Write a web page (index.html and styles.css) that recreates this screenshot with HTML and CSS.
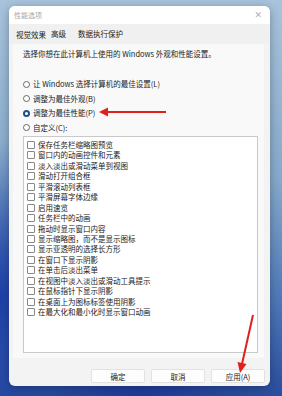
FILE: index.html
```html
<!DOCTYPE html>
<html lang="zh-CN">
<head>
  <meta charset="UTF-8">
  <meta name="viewport" content="width=device-width, initial-scale=1.0">
  <title>性能选项</title>
  <link rel="stylesheet" href="styles.css">
</head>
<body>
  <div class="dialog">
    <div class="titlebar">
      <span class="title">性能选项</span>
      <span class="close">✕</span>
    </div>
    <div class="tabs">
      <span class="tab active">视觉效果</span>
      <span class="tab">高级</span>
      <span class="tab">数据执行保护</span>
    </div>
    <div class="panel">
      <p class="desc">选择你想在此计算机上使用的 Windows 外观和性能设置。</p>
      <div class="radios">
        <label class="radio"><span class="dot"></span>让 Windows 选择计算机的最佳设置(L)</label>
        <label class="radio"><span class="dot"></span>调整为最佳外观(B)</label>
        <label class="radio"><span class="dot on"></span>调整为最佳性能(P)</label>
        <label class="radio"><span class="dot"></span>自定义(C):</label>
      </div>
      <div class="list">
        <label class="item"><span class="box"></span>保存任务栏缩略图预览</label>
        <label class="item"><span class="box"></span>窗口内的动画控件和元素</label>
        <label class="item"><span class="box"></span>淡入淡出或滑动菜单到视图</label>
        <label class="item"><span class="box"></span>滑动打开组合框</label>
        <label class="item"><span class="box"></span>平滑滚动列表框</label>
        <label class="item"><span class="box"></span>平滑屏幕字体边缘</label>
        <label class="item"><span class="box"></span>启用速览</label>
        <label class="item"><span class="box"></span>任务栏中的动画</label>
        <label class="item"><span class="box"></span>拖动时显示窗口内容</label>
        <label class="item"><span class="box"></span>显示缩略图，而不是显示图标</label>
        <label class="item"><span class="box"></span>显示亚透明的选择长方形</label>
        <label class="item"><span class="box"></span>在窗口下显示阴影</label>
        <label class="item"><span class="box"></span>在单击后淡出菜单</label>
        <label class="item"><span class="box"></span>在视图中淡入淡出或滑动工具提示</label>
        <label class="item"><span class="box"></span>在鼠标指针下显示阴影</label>
        <label class="item"><span class="box"></span>在桌面上为图标标签使用阴影</label>
        <label class="item"><span class="box"></span>在最大化和最小化时显示窗口动画</label>
      </div>
    </div>
    <div class="buttons">
      <button class="btn">确定</button>
      <button class="btn">取消</button>
      <button class="btn">应用(A)</button>
    </div>
  </div>

  <svg class="arrows" width="282" height="396" viewBox="0 0 282 396">
    <line x1="166" y1="112" x2="106" y2="112" stroke="#e0201c" stroke-width="2"/>
    <polygon points="99,112 108,107.5 108,116.5" fill="#e0201c"/>
    <line x1="253" y1="315" x2="242" y2="364" stroke="#e0201c" stroke-width="2"/>
    <polygon points="240,373 237.5,362 246.5,364" fill="#e0201c"/>
  </svg>
</body>
</html>
```

FILE: styles.css
```css
* {
  box-sizing: border-box;
}
body {
  margin: 0;
  width: 282px;
  height: 396px;
  overflow: hidden;
  font-family: "Noto Sans CJK SC", "Noto Sans", sans-serif;
  font-size: 7.5px;
  color: #222;
  background:
    radial-gradient(ellipse 60px 160px at 0px 300px, #1c3fa8 0%, rgba(28, 63, 168, 0) 100%),
    radial-gradient(ellipse 120px 60px at 140px 400px, #1d3a9a 0%, rgba(29, 58, 154, 0) 100%),
    linear-gradient(to bottom, #a8c3dc 0%, #86aacb 45%, #4f79b8 75%, #2a4d9e 100%);
}
.dialog {
  margin: 6px 0 0 9px;
  width: 261px;
  height: 380px;
  background: #f3f3f3;
  border-radius: 6px;
  overflow: hidden;
  box-shadow: 0 2px 10px rgba(0, 0, 0, 0.3);
  display: flex;
  flex-direction: column;
}
.titlebar {
  height: 18px;
  background: #fff;
  display: flex;
  align-items: center;
  justify-content: space-between;
  padding: 0 8px 0 5px;
}
.title {
  color: #a8a8a8;
  font-size: 7px;
}
.close {
  color: #b0b0b0;
  font-size: 9px;
  font-family: "DejaVu Sans", sans-serif;
}
.tabs {
  height: 19px;
  background: #f0f0f0;
  display: flex;
  align-items: center;
  padding-left: 7px;
}
.tab {
  color: #222;
}
.tab.active {
  padding: 3px 0 2px;
}
.tab + .tab {
  margin-left: 5px;
}
.tab + .tab + .tab {
  margin-left: 12px;
}
.panel {
  margin: 0 5px 0 3px;
  height: 316px;
  background: #f9f9f9;
  border: 1px solid #f2f2f2;
  padding: 5px 8px 0 10px;
}
.desc {
  margin: 0;
  line-height: 10px;
  height: 26px;
}
.radios {
  display: flex;
  flex-direction: column;
  gap: 4.6px;
  margin-top: 4px;
}
.radio {
  display: flex;
  align-items: center;
  line-height: 10px;
}
.dot {
  width: 7px;
  height: 7px;
  margin-right: 3px;
  border-radius: 50%;
  border: 1px solid #666;
  background: #fff;
}
.dot.on {
  border: 2px solid #1f4f8f;
  background: #fff;
}
.list {
  margin-top: 3px;
  width: 235px;
  height: 217px;
  background: #fff;
  border: 1px solid #c9c9c9;
  padding: 3px 0 0 3px;
  display: flex;
  flex-direction: column;
}
.item {
  display: flex;
  align-items: center;
  height: 10.45px;
  line-height: 10px;
}
.box {
  width: 8px;
  height: 8px;
  margin-right: 3px;
  border: 1px solid #888;
  border-radius: 1px;
  background: #fff;
}
.buttons {
  display: flex;
  justify-content: flex-end;
  gap: 6px;
  padding: 10px 5px 0 0;
}
.btn {
  width: 54px;
  height: 14px;
  padding: 0;
  font-family: inherit;
  font-size: 7.5px;
  color: #222;
  background: #fdfdfd;
  border: 1px solid #e2e2e2;
  border-radius: 2px;
}
.arrows {
  position: absolute;
  left: 0;
  top: 0;
}
```
